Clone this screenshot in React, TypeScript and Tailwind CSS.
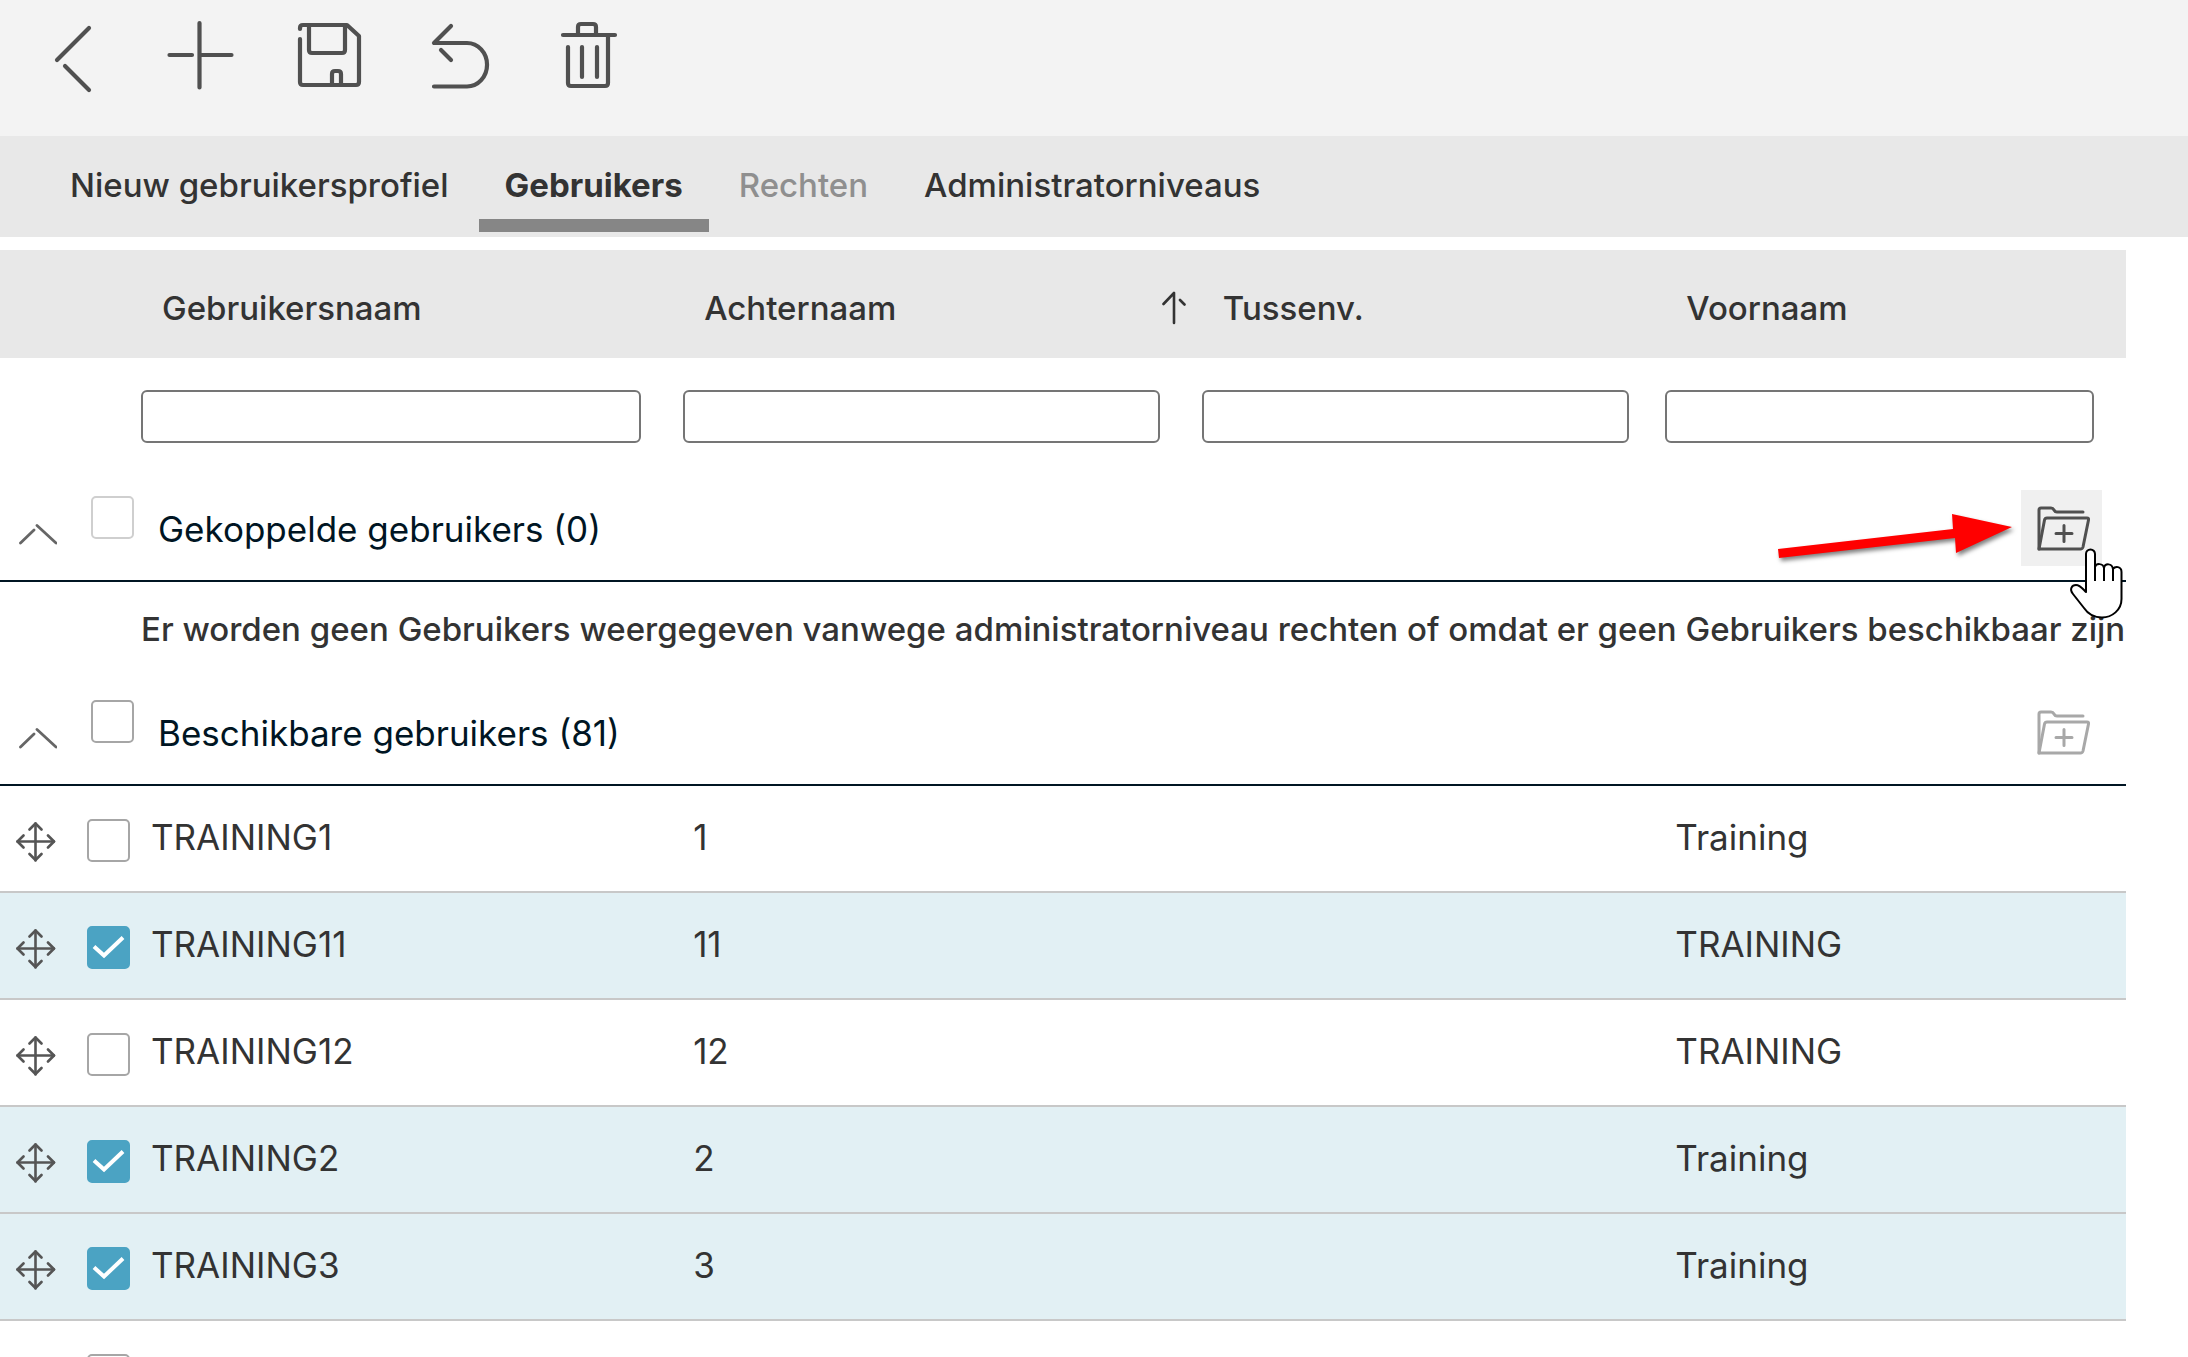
import { useState, type ReactNode } from "react";
import clsx from "clsx";

type User = { id: number; username: string; lastName: string; firstName: string; selected?: boolean };

const users: User[] = [
  { id: 1, username: "TRAINING1", lastName: "1", firstName: "Training" },
  { id: 2, username: "TRAINING11", lastName: "11", firstName: "TRAINING", selected: true },
  { id: 3, username: "TRAINING12", lastName: "12", firstName: "TRAINING" },
  { id: 4, username: "TRAINING2", lastName: "2", firstName: "Training", selected: true },
  { id: 5, username: "TRAINING3", lastName: "3", firstName: "Training", selected: true },
  { id: 6, username: "", lastName: "", firstName: "" },
];

const tabs = [
  { label: "Nieuw gebruikersprofiel" },
  { label: "Gebruikers" },
  { label: "Rechten", disabled: true },
  { label: "Administratorniveaus" },
];

const columns = [
  { label: "Gebruikersnaam", filter: "pr-[42px]" },
  { label: "Achternaam", filter: "pr-[42px]", sorted: true },
  { label: "Tussenv.", filter: "pr-9" },
  { label: "Voornaam", filter: "pr-8" },
];

const toolbar = [
  { label: "Terug", d: "M65 20L33 52M41 58L65 82" },
  { label: "Toevoegen", d: "M47.5 15V79.5M17.5 47H40M48 47H79.5" },
  {
    label: "Opslaan",
    d: "M20 21V20Q20 17 23 17H67L79 28V74Q79 77 76 77H23Q20 77 20 74V31M29 17V42Q29 45 32 45H62Q65 45 65 42V17M52 77V66Q52 63 55 63H58Q61 63 61 66V77",
  },
  { label: "Ongedaan maken", d: "M43 18L26 35H59A20 21.7 0 0 1 59 78.5H26M33 42L43 52" },
  {
    label: "Verwijderen",
    d: "M27 27H79M42 27V19Q42 16 45 16H57Q60 16 60 19V27M32 39V75Q32 78 35 78H69Q72 78 72 75V29M46 39V69M61 39V69",
  },
];

function FolderAddIcon() {
  return (
    <svg viewBox="0 0 81 76" className="h-full w-full" fill="none" stroke="currentColor" strokeWidth="3" strokeLinecap="round" strokeLinejoin="round">
      <path d="M18 59V20Q18 18 20 18H30Q32 18 33 20T36 22H62" />
      <path d="M18 59L23.5 30Q24 28 26 28H66Q68 28 67.5 30L62 57Q61.5 59 59.5 59Z" />
      <path d="M43 35.5V51.5M35 43.5H51" />
    </svg>
  );
}

function MoveIcon() {
  return (
    <svg viewBox="0 0 40 40" className="h-10 w-10 shrink-0" fill="none" stroke="#555" strokeWidth="2.6" strokeLinecap="round" strokeLinejoin="round">
      <path d="M19.5 1.5V38.5M1.5 19.5H38" />
      <path d="M13.5 7.5L19.5 1.5L25.5 7.5M13.5 32L19.5 38L25.5 32M7.5 13.5L1.5 19.5L7.5 25.5M32 13.5L38 19.5L32 25.5" />
    </svg>
  );
}

// Arrow and hand pointing at the link button of the first group
function Pointer() {
  return (
    <svg viewBox="0 0 360 150" className="pointer-events-none absolute top-0 right-0 z-10 h-[150px] w-[360px]">
      <path
        d="M12 74L187 54L186 39L246 52L190 78L189 63L13 83Z"
        fill="#ff0000"
        className="[filter:drop-shadow(2px_3px_2px_rgba(0,0,0,0.5))]"
      />
      <g transform="translate(304 73)" stroke="#000" strokeWidth="2" strokeLinejoin="round">
        <path
          fill="#fff"
          d="M16 44V6A4.5 4.5 0 0 1 25 6V19C26 15 33 15 34 20C35 15 42 15 43 21C45 18 51.5 18 51.5 24V51C51.5 62 42 69.5 32 69.5C24 69.5 18 66 14 60L3 46C-1 41 2 37 6 37C10 37 12 40 16 44Z"
        />
        <path fill="none" d="M25 18V33M34 19V33M43 20V33" />
      </g>
    </svg>
  );
}

type CheckboxProps = { label: string; checked?: boolean; disabled?: boolean; onChange?: () => void };

function Checkbox({ label, checked = false, disabled, onChange }: CheckboxProps) {
  return (
    <span className="grid shrink-0 *:[grid-area:1/1]">
      <input
        type="checkbox"
        aria-label={label}
        checked={checked}
        disabled={disabled}
        onChange={onChange}
        className="h-[43px] w-[43px] appearance-none rounded-[5px] border-2 border-[#a6a6a6] bg-white checked:border-[#4ba3c3] checked:bg-[#4ba3c3] disabled:border-[#cfcfcf]"
      />
      {checked && (
        <svg viewBox="0 0 43 43" className="pointer-events-none h-[43px] w-[43px]" fill="none" stroke="#fff" strokeWidth="4">
          <path d="M7 20.5L17 29.5L36 11.5" />
        </svg>
      )}
    </span>
  );
}

type GroupRowProps = { title: string; disabled?: boolean; active?: boolean; children?: ReactNode };

function GroupRow({ title, disabled, active, children }: GroupRowProps) {
  const [checked, setChecked] = useState(false);

  return (
    <tr>
      <th colSpan={5} scope="colgroup" className="border-b-2 border-[#001523] p-0 font-normal">
        <div className="relative flex h-[105px] items-center pr-6 pl-[19px]">
          <button type="button" aria-label={`${title} inklappen`} className="pt-3">
            <svg viewBox="0 0 38 22" className="h-[22px] w-[38px]" fill="none" stroke="#666" strokeWidth="2.8" strokeLinecap="round">
              <path d="M1.5 20L15 7M18 2.5L37 20" />
            </svg>
          </button>
          <div className="pb-5 pl-[34px]">
            <Checkbox label={title} checked={checked} disabled={disabled} onChange={() => setChecked(!checked)} />
          </div>
          <span className="pt-0.5 pl-6 text-[35px] text-[#001523]">{title}</span>
          <button
            type="button"
            aria-label={`${title} koppelen`}
            className={clsx("ml-auto h-[76px] w-[81px]", active ? "bg-[#f0f0f0] text-[#505050]" : "text-[#a8a8a8]")}
          >
            <FolderAddIcon />
          </button>
          {children}
        </div>
      </th>
    </tr>
  );
}

export default function App() {
  const [activeTab, setActiveTab] = useState("Gebruikers");
  const [selected, setSelected] = useState<number[]>(users.filter((u) => u.selected).map((u) => u.id));

  const toggle = (id: number) =>
    setSelected((prev) => (prev.includes(id) ? prev.filter((x) => x !== id) : [...prev, id]));

  return (
    <div className="h-screen overflow-hidden bg-white font-['Inter','Liberation_Sans',sans-serif] text-[33px] leading-10 text-[#333]">
      <header className="flex gap-8 bg-[#f3f3f3] px-6 pt-2 pb-8">
        {toolbar.map((t) => (
          <button key={t.label} type="button" aria-label={t.label} className="h-24 w-24">
            <svg viewBox="0 0 96 96" fill="none" stroke="#505050" strokeWidth="4.2" strokeLinecap="round" strokeLinejoin="round">
              <path d={t.d} />
            </svg>
          </button>
        ))}
      </header>

      <nav className="flex gap-1 bg-[#e8e8e8] pb-[5px] pl-11 font-medium">
        {tabs.map((t) => (
          <button
            key={t.label}
            type="button"
            disabled={t.disabled}
            onClick={() => setActiveTab(t.label)}
            className={clsx(
              "h-24 border-b-[13px] px-[26px] pt-3.5",
              activeTab === t.label ? "border-[#868686] font-bold" : "border-transparent",
              t.disabled && "text-[#8f8f8f]"
            )}
          >
            {t.label}
          </button>
        ))}
      </nav>

      <main className="pt-[13px] pr-[62px]">
        <table className="w-full table-fixed border-separate border-spacing-0 text-left">
          <colgroup>
            <col className="w-[141px]" />
            <col className="w-[25.5%]" />
            <col className="w-[24.4%]" />
            <col className="w-[21.8%]" />
            <col />
          </colgroup>
          <thead>
            <tr className="h-[108px] bg-[#e8e8e8]">
              <td className="p-0" />
              {columns.map((c) => (
                <th key={c.label} scope="col" className="p-0 pt-2 pl-[21px] font-medium">
                  <div className="flex items-center justify-between pr-4">
                    {c.label}
                    {c.sorted && (
                      <svg viewBox="0 0 24 34" className="h-[34px] w-6" fill="none" stroke="#333" strokeWidth="2.6" strokeLinecap="round">
                        <path d="M12 2V32M1.5 13L12 2M18 9L22.5 13.5" />
                      </svg>
                    )}
                  </div>
                </th>
              ))}
            </tr>
            <tr className="h-[117px]">
              <td className="p-0" />
              {columns.map((c) => (
                <td key={c.label} className={clsx("p-0", c.filter)}>
                  <input
                    type="text"
                    aria-label={c.label}
                    className="block h-[53px] w-full rounded-md border-2 border-[#757575] bg-white px-3"
                  />
                </td>
              ))}
            </tr>
          </thead>
          <tbody>
            <GroupRow title="Gekoppelde gebruikers (0)" disabled active>
              <Pointer />
            </GroupRow>
            <tr className="h-[97px]">
              <td colSpan={5} className="p-0 pb-1 pl-[141px] font-medium whitespace-nowrap">
                Er worden geen Gebruikers weergegeven vanwege administratorniveau rechten of omdat er geen Gebruikers beschikbaar zijn
              </td>
            </tr>
            <GroupRow title="Beschikbare gebruikers (81)" />
            {users.map((u) => {
              const checked = selected.includes(u.id);
              return (
                <tr key={u.id} className={clsx("h-[107px] text-[35px] *:border-b-2 *:border-[#c8c8c8]", checked && "bg-[#e2f0f4]")}>
                  <td className="p-0">
                    <div className="flex items-end gap-[31px] pt-1 pl-4">
                      <MoveIcon />
                      <Checkbox label={u.username} checked={checked} onChange={() => toggle(u.id)} />
                    </div>
                  </td>
                  <td className="p-0 pb-1 pl-2.5">{u.username}</td>
                  <td className="p-0 pb-1 pl-2.5">{u.lastName}</td>
                  <td className="p-0" />
                  <td className="p-0 pb-1 pl-2.5">{u.firstName}</td>
                </tr>
              );
            })}
          </tbody>
        </table>
      </main>
    </div>
  );
}
